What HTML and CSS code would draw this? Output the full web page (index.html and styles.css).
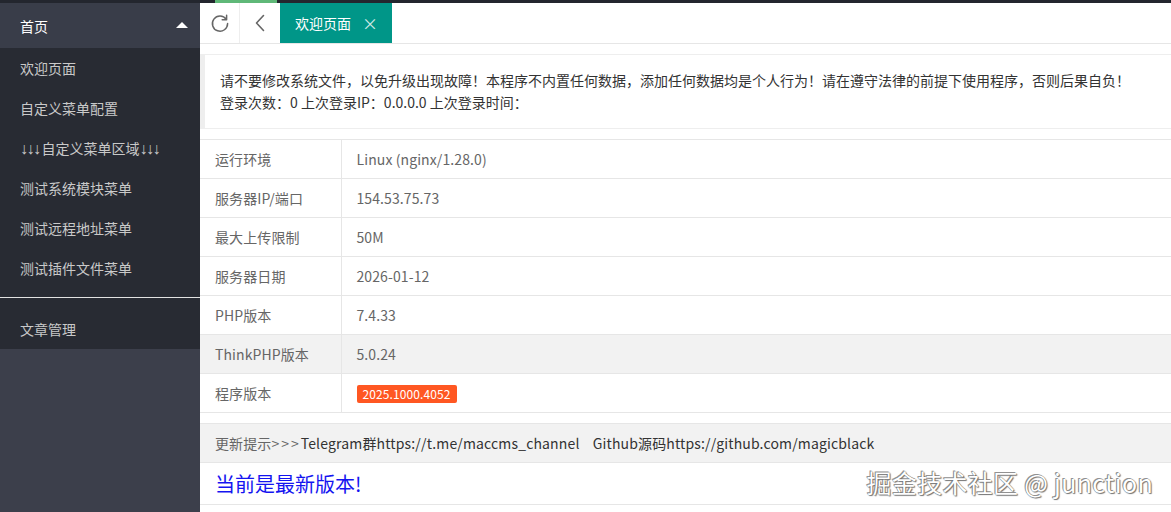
FILE: index.html
```html
<!DOCTYPE html>
<html lang="zh-CN">
<head>
<meta charset="utf-8">
<title>欢迎页面</title>
<link rel="stylesheet" href="styles.css">
</head>
<body>
<div class="topbar"><span class="tb-dark"></span><span class="tb-green"></span><span class="tb-rest"></span></div>
<div class="layout">
  <aside class="side">
    <div class="nav-parent"><span>首页</span><span class="tri"></span></div>
    <div class="nav-child">
      <div class="child-item">欢迎页面</div>
      <div class="child-item">自定义菜单配置</div>
      <div class="child-item"><span class="arr">↓↓↓</span>自定义菜单区域<span class="arr">↓↓↓</span></div>
      <div class="child-item">测试系统模块菜单</div>
      <div class="child-item">测试远程地址菜单</div>
      <div class="child-item">测试插件文件菜单</div>
      <div class="child-sep"></div>
      <div class="child-line"></div>
      <div class="child-item last">文章管理</div>
    </div>
  </aside>
  <main class="main">
    <div class="tabbar">
      <div class="tab-btn">
        <svg width="20" height="20" viewBox="0 0 20 20"><path d="M16.2 6.2 A7.6 7.6 0 1 0 17.6 10.6" fill="none" stroke="#666" stroke-width="1.5" stroke-linecap="round"/><path d="M16.6 2.2 L16.6 6.8 L12.2 6.8" fill="none" stroke="#666" stroke-width="1.5" stroke-linecap="round" stroke-linejoin="round"/></svg>
      </div>
      <div class="tab-btn">
        <svg width="12" height="20" viewBox="0 0 12 20"><path d="M9.5 2.5 L2.5 10 L9.5 17.5" fill="none" stroke="#666" stroke-width="1.6" stroke-linecap="round" stroke-linejoin="round"/></svg>
      </div>
      <div class="tab-active">欢迎页面<span class="tab-close">×</span></div>
    </div>
    <div class="content">
      <div class="quote">
        <div>请不要修改系统文件，以免升级出现故障！本程序不内置任何数据，添加任何数据均是个人行为！请在遵守法律的前提下使用程序，否则后果自负！</div>
        <div>登录次数：0 上次登录IP：0.0.0.0 上次登录时间：</div>
      </div>
      <table class="info">
        <tr><td class="k">运行环境</td><td>Linux (nginx/1.28.0)</td></tr>
        <tr><td class="k">服务器IP/端口</td><td>154.53.75.73</td></tr>
        <tr><td class="k">最大上传限制</td><td>50M</td></tr>
        <tr><td class="k">服务器日期</td><td>2026-01-12</td></tr>
        <tr><td class="k">PHP版本</td><td>7.4.33</td></tr>
        <tr class="hover"><td class="k">ThinkPHP版本</td><td>5.0.24</td></tr>
        <tr><td class="k">程序版本</td><td><span class="badge">2025.1000.4052</span></td></tr>
      </table>
      <table class="update">
        <tr class="hover"><td>更新提示<span class="gt">&gt;&gt;&gt;</span><span class="dark">Telegram群https://t.me/maccms_channel&nbsp;&nbsp;&nbsp;&nbsp;Github源码https://github.com/magicblack</span></td></tr>
        <tr><td class="latest">当前是最新版本!</td></tr>
      </table>
    </div>
    <div class="watermark">掘金技术社区 @ junction</div>
  </main>
</div>
</body>
</html>
```
FILE: styles.css
```css
* { box-sizing: border-box; }
html, body { margin: 0; padding: 0; }
body {
  width: 1171px;
  height: 512px;
  overflow: hidden;
  font-family: "Noto Sans CJK SC", "Noto Sans", sans-serif;
  font-size: 14px;
  color: #333;
  background: #fff;
}
.topbar { display: flex; height: 3px; }
.tb-dark { width: 215px; background: #23262e; }
.tb-green { width: 62px; background: #5FB878; }
.tb-rest { flex: 1; background: #23262e; }

.layout { display: flex; height: 509px; }
.side { width: 200px; flex: none; background: #3c3f4b; }
.nav-parent {
  height: 45px;
  background: #393D49;
  color: #fff;
  display: flex;
  align-items: center;
  justify-content: space-between;
  padding: 0 12px 0 20px;
}
.tri {
  width: 0; height: 0;
  border-left: 6px solid transparent;
  border-right: 6px solid transparent;
  border-bottom: 6px solid #fff;
  margin-top: -2px;
}
.nav-child { background: #282b33; }
.child-item {
  height: 40px;
  line-height: 40px;
  padding-left: 20px;
  color: #c9c9c9;
  white-space: nowrap;
}
.arr {
  font-family: "Liberation Sans", "DejaVu Sans", sans-serif;
  font-size: 16px;
  letter-spacing: -1.5px;
  margin-right: 2px;
}
.child-sep { height: 9px; }
.child-line { height: 1px; background: #e2e2e2; }
.child-item.last { height: 51px; padding-top: 11px; }

.main { flex: 1; position: relative; min-width: 0; }
.tabbar {
  display: flex;
  height: 41px;
  border-bottom: 1px solid #e6e6e6;
}
.tab-btn {
  width: 40px;
  display: flex;
  align-items: center;
  justify-content: center;
  border-right: 1px solid #eee;
}
.tab-btn + .tab-btn { border-right: none; }
.tab-active {
  width: 112px;
  background: #009688;
  color: #fff;
  display: flex;
  align-items: center;
  padding-left: 15px;
  font-size: 14px;
}
.tab-close { margin-left: 11px; color: #cfe9e6; font-size: 16px; }

.content { padding-top: 10px; }
.quote {
  border: 1px solid #eee;
  border-left-width: 5px;
  border-right: none;
  padding: 14px 15px 15px;
  line-height: 22px;
  color: #333;
}
table { border-collapse: collapse; width: 100%; }
.info { margin-top: 10px; }
td {
  border-top: 1px solid #e6e6e6;
  border-bottom: 1px solid #e6e6e6;
  padding: 9px 15px;
  line-height: 20px;
  color: #666;
  height: 39px;
  letter-spacing: 0.1px;
}
td.k { width: 141px; border-right: 1px solid #e6e6e6; }
tr.hover td { background: #f2f2f2; }
.badge {
  display: inline-block;
  background: #FF5722;
  color: #fff;
  font-size: 12px;
  line-height: 18px;
  padding: 0 6px;
  border-radius: 2px;
}
.update { margin-top: 10px; }
.gt { letter-spacing: 2px; }
.dark { color: #333; letter-spacing: 0.15px; }
td.latest { color: #1414f0; font-size: 20px; height: 42px; padding-top: 7px; padding-bottom: 7px; line-height: 26px; letter-spacing: 0; }
.watermark {
  position: absolute;
  right: 18px;
  bottom: 12px;
  font-size: 25px;
  color: #fff;
  letter-spacing: 0.3px;
  text-shadow: 0 0 1px #555, 1px 1px 1px #777, -1px -1px 0 #999;
}
```
